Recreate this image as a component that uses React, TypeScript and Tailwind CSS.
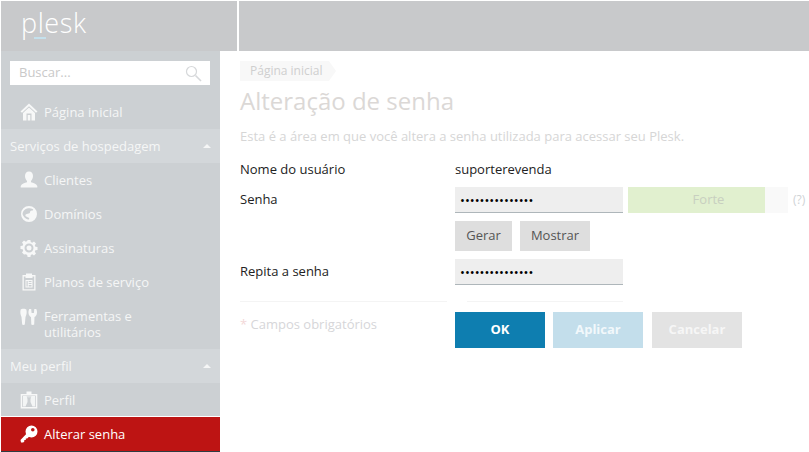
import React from "react";

const Row = ({ icon, children }: { icon: React.ReactNode; children: React.ReactNode }) => (
  <div className="flex h-[34px] items-center pl-[19px] text-[13px] leading-[17px] text-[#f5f6f6]">
    <span className="flex w-[24px] shrink-0 items-center">{icon}</span>
    <span>{children}</span>
  </div>
);

const Group = ({ children }: { children: React.ReactNode }) => (
  <div className="flex h-[34px] items-center justify-between bg-[#d3d7da] pl-[9px] pr-[9px] text-[13px] text-[#f5f6f6]">
    <span className="pt-[1px]">{children}</span>
    <span className="h-0 w-0 border-x-[4px] border-b-[4px] border-x-transparent border-b-[#f5f6f6]" />
  </div>
);

const Ic = ({ children }: { children: React.ReactNode }) => (
  <svg width="18" height="18" viewBox="0 0 18 18" fill="#f7f8f8">{children}</svg>
);

const Home = () => (
  <Ic>
    <path d="M9 .5 L17.500 8.500 L16 9.800 L9 3.300 L2 9.800 L.5 8.500 Z" />
    <path
      fillRule="evenodd"
      d="M9 4.500 L15 10 V17.500 H3 V10 Z M6.500 10.500 V17.500 H11.500 V10.500 Z M7.700 12 H10.300 V17.500 H7.700 Z"
    />
  </Ic>
);
const User = () => (
  <Ic>
    <path d="M9 .5c2.600 0 4 2 4 4.600 0 2-.9 3.800-2 4.800v1.400c2.200.8 5.400 1.500 6.300 3.700v1.500H.7V15c.9-2.200 4.100-2.900 6.300-3.700V9.900C5.900 8.900 5 7.100 5 5.100 5 2.500 6.400.5 9 .5z" />
  </Ic>
);
const Globe = () => (
  <Ic>
    <path
      fillRule="evenodd"
      d="M9 1a8 8 0 1 1 0 16A8 8 0 0 1 9 1zM7 3.500C4.500 4.200 2.800 6.300 2.500 9c.6 2.500 3 5 5.500 5.500 1 .1 1.500-.6 1-1.500-.8-.8-2-1-3-1.500-.8-.6-.8-1.800 0-2.300 1-.7 2.500-.3 3.500-1 .8-.6.300-1.500 1-2.200.7-.6 1.800-.2 2.500-.8.400-.5.100-1-.5-1.300C11 3 9 3 7 3.500z"
    />
  </Ic>
);
const Gear = () => (
  <Ic>
    <path
      fillRule="evenodd"
      d="M7.600 1h2.800l.4 2.100 1.400.6 1.800-1.200 2 2-1.200 1.800.6 1.400 2.100.4v2.800l-2.100.4-.6 1.400 1.200 1.800-2 2-1.800-1.200-1.400.6-.4 2.100H7.600l-.4-2.100-1.400-.6L4 15.500l-2-2 1.200-1.800-.6-1.400L.500 9.900V7.100l2.100-.4.6-1.400L2 3.500l2-2 1.800 1.200 1.400-.6zM9 4.500a4.500 4.500 0 1 0 0 9 4.500 4.500 0 0 0 0-9zM9 6.500a2.500 2.500 0 1 1 0 5 2.500 2.500 0 0 1 0-5z"
    />
  </Ic>
);
const Plan = () => (
  <Ic>
    <path d="M6 .5h6V3h-6z" />
    <path
      fillRule="evenodd"
      d="M2.500 2h13v15.500h-13zM3.800 3.500v12.700h10.400V3.500h-1.700V5h-7V3.500z"
    />
    <path
      fillRule="evenodd"
      d="M5.500 7h7v7.500h-7zM6.500 8v5.500h1.200V8zM8.700 8v1h2.800V8zM8.700 10v1h2.800v-1zM8.700 12v1.500h2.800V12z"
    />
  </Ic>
);
const Tools = () => (
  <Ic>
    <path d="M.7 1.500C1.200.6 5.800.6 6.300 1.500c.7 2.300.5 5-.8 7.500L4.800 16.500c-.3.600-2.300.6-2.600 0L1.500 9C.3 6.500 0 3.800.7 1.500z" />
    <path d="M9.200 1l2 .1.400 4h2.300l.4-4 2-.1c1.300 3 .9 6.600-1.800 8l-.3 7.500c-.3.600-2.600.6-2.900 0L11 9C8.300 7.600 7.900 4 9.200 1z" />
  </Ic>
);
const Profile = () => (
  <svg width="18" height="18" viewBox="0 0 18 18">
    <path d="M6.500 .5h5V4h-5z" fill="#f7f8f8" />
    <path
      fillRule="evenodd"
      fill="#f7f8f8"
      d="M.7 3h16.600v14.500H.7zM2.200 4.500v11.500h13.600V4.500z"
    />
    <path d="M3 5h3.500l1 3v3l-2 4.500H3zM15 5h-3.500l-1 3v3l2 4.500H15z" fill="#f7f8f8" opacity=".9" />
    <path d="M3 5h12v1.500H3z" fill="#f7f8f8" opacity=".45" />
  </svg>
);
const Key = () => (
  <svg width="18" height="18" viewBox="0 0 18 18" fill="#ffffff">
    <path
      fillRule="evenodd"
      d="M11.500 .5a6 6 0 1 1 0 12 6 6 0 0 1 0-12zM12.800 3a1.800 1.800 0 1 0 0 3.600 1.800 1.800 0 0 0 0-3.600z"
    />
    <path d="M7.200 8 L10 10.800 L7.200 13.600 L5.800 13.600 L5.800 15 L4.300 15 L4.300 16.500 L3.200 17.500 L1 17.500 L.5 15 Z" />
  </svg>
);

const FormRow = ({
  label,
  className,
  children,
}: {
  label?: string;
  className: string;
  children: React.ReactNode;
}) => (
  <div className={`flex items-center ${className}`}>
    <div className="w-[215px] shrink-0 text-[13px] text-[#222222]">{label}</div>
    {children}
  </div>
);

const Password = () => (
  <input
    type="password"
    readOnly
    value="123456789012345"
    className="h-[26px] w-[168px] border-b border-[#aeb6ba] bg-[#eeeeee] pl-[5px] text-[13px] text-black outline-none"
  />
);

export default function App() {
  return (
    <div className="flex h-[452px] w-[809px] flex-col overflow-hidden bg-white pl-px pt-px font-['Open_Sans',sans-serif]">
      <header className="flex h-[50px] shrink-0 bg-[#c8c9cb]">
        <div className="flex w-[236px] shrink-0 items-start pl-[20px]">
          <div className="relative text-[27px] font-light leading-[44px] tracking-[0.6px] text-white">
            plesk
            <span className="absolute left-[13px] top-[36px] h-[2px] w-[12px] bg-[#c4e0ec]" />
          </div>
        </div>
        <div className="w-[2px] shrink-0 bg-white" />
        <div className="flex-1" />
      </header>
      <div className="flex min-h-0 flex-1">
        <aside className="flex w-[219px] shrink-0 flex-col bg-[#ccd0d3]">
          <div className="flex h-[34px] shrink-0 items-end pl-[9px]">
            <div className="flex h-[24px] w-[200px] items-center justify-between bg-white pl-[9px] pr-[8px] text-[13px] text-[#c9c9c9]">
              <span>Buscar...</span>
              <svg width="17" height="17" viewBox="0 0 17 17" fill="none" stroke="#d6d8da" strokeWidth="1.200">
                <circle cx="6.500" cy="6.500" r="5" />
                <path d="M10.500 10.500 L16 16" strokeWidth="1.600" />
              </svg>
            </div>
          </div>
          <div className="flex h-[44px] shrink-0 flex-col justify-end">
            <Row icon={<Home />}>Página inicial</Row>
          </div>
          <Group>Serviços de hospedagem</Group>
          <Row icon={<User />}>Clientes</Row>
          <Row icon={<Globe />}>Domínios</Row>
          <Row icon={<Gear />}>Assinaturas</Row>
          <Row icon={<Plan />}>Planos de serviço</Row>
          <div className="flex h-[50px] items-start pl-[19px] pt-[9px] text-[13px] leading-[16px] text-[#f5f6f6]">
            <span className="flex w-[24px] shrink-0 items-center">
              <Tools />
            </span>
            <span>
              Ferramentas e
              <br />
              utilitários
            </span>
          </div>
          <Group>Meu perfil</Group>
          <div className="h-[33px]">
            <Row icon={<Profile />}>Perfil</Row>
          </div>
          <div className="h-px bg-white" />
          <div className="bg-[#bd1413]">
            <Row icon={<Key />}>
              <span className="text-white">Alterar senha</span>
            </Row>
          </div>
          <div className="h-px bg-[#2f3c42]" />
        </aside>
        <main className="min-w-0 flex-1 pl-[20px] pt-[10px]">
          <div className="flex h-[20px] items-center">
            <div className="flex h-[20px] items-center bg-[#f8f8f8] pl-[10px] pr-[7px] text-[12px] text-[#cfcfcf]">
              Página inicial
            </div>
            <div className="h-0 w-0 border-y-[10px] border-l-[7px] border-y-transparent border-l-[#f8f8f8]" />
          </div>
          <h1 className="mt-[3px] h-[34px] text-[24px] font-normal leading-[34px] text-[#dbd8d6]">
            Alteração de senha
          </h1>
          <p className="mt-[9px] text-[13px] leading-[18px] text-[#d6d6d6]">
            Esta é a área em que você altera a senha utilizada para acessar seu Plesk.
          </p>
          <FormRow label="Nome do usuário" className="mt-[16px] h-[18px]">
            <span className="text-[13px] text-[#222222]">suporterevenda</span>
          </FormRow>
          <FormRow label="Senha" className="mt-[8px] h-[26px]">
            <Password />
            <div className="relative ml-[5px] h-[26px] w-[160px] bg-[#f9f9f9]">
              <div className="h-[26px] w-[137px] bg-[#e1f0cf]" />
              <span className="absolute inset-0 flex items-center justify-center pl-[1px] text-[13px] text-[#c8cfc0]">
                Forte
              </span>
            </div>
            <span className="ml-[5px] text-[12px] text-[#cfd3d6]">(?)</span>
          </FormRow>
          <FormRow className="mt-[8px] h-[30px]">
            <div className="flex gap-[8px]">
              <button className="flex h-[30px] w-[57px] items-center justify-center bg-[#dedede] text-[13px] text-[#555555]">
                Gerar
              </button>
              <button className="flex h-[30px] w-[70px] items-center justify-center bg-[#dedede] text-[13px] text-[#555555]">
                Mostrar
              </button>
            </div>
          </FormRow>
          <FormRow label="Repita a senha" className="mt-[8px] h-[26px]">
            <Password />
          </FormRow>
          <div className="mt-[16px] flex h-px w-[383px]">
            <div className="w-[207px] bg-[#f4f4f4]" />
            <div className="w-[20px]" />
            <div className="flex-1 bg-[#f4f4f4]" />
          </div>
          <div className="mt-[10px] flex">
            <div className="w-[215px] shrink-0 pt-[3px] text-[13px] text-[#d6d6d9]">
              <span className="text-[#f3d8d8]">*</span> Campos obrigatórios
            </div>
            <div className="flex">
              <button className="flex h-[36px] w-[90px] items-center justify-center bg-[#0e7eb0] text-[13px] font-bold text-white">
                OK
              </button>
              <button className="ml-[8px] flex h-[36px] w-[90px] items-center justify-center bg-[#c3deeb] text-[13px] font-bold text-[#f2f8fb]">
                Aplicar
              </button>
              <button className="ml-[9px] flex h-[36px] w-[90px] items-center justify-center bg-[#e3e3e3] text-[13px] font-bold text-[#f6f6f6]">
                Cancelar
              </button>
            </div>
          </div>
        </main>
      </div>
    </div>
  );
}
